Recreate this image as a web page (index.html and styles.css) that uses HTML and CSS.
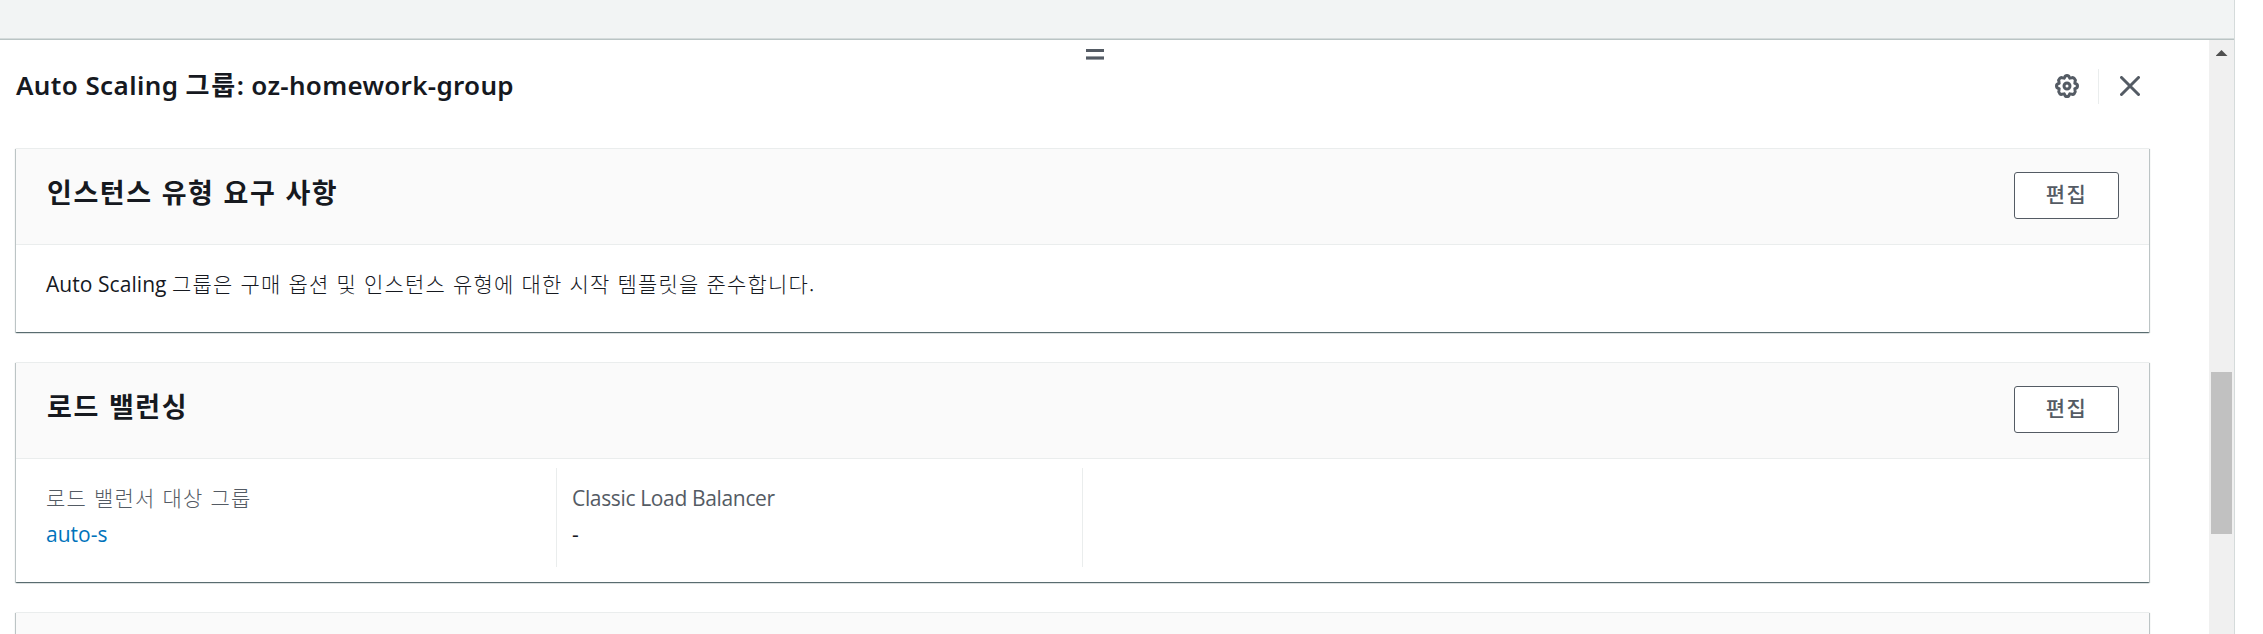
FILE: index.html
```html
<!DOCTYPE html>
<html lang="ko">
<head>
<meta charset="utf-8">
<title>Auto Scaling</title>
<link rel="stylesheet" href="styles.css">
</head>
<body>
<div class="page">
  <div class="backdrop"></div>
  <section class="panel">
    <div class="content">
      <div class="handle"><i class="grip"></i><i class="grip grip-low"></i></div>
      <header class="panel-head">
        <h1 class="panel-title"><span class="t-a">Auto Scaling </span><span class="t-b">그룹</span><span class="t-c">: oz-homework-group</span></h1>
        <div class="tools">
          <svg class="gear" viewBox="0 0 24 24"><path d="M9.8 3.2 Q10.2 1.5 12 1.5 Q13.8 1.5 14.2 3.2 L14.8 4.1 L16.6 3.9 Q18.1 3.1 19.4 4.6 Q20.8 5.9 20.1 7.3 L19.9 9.2 L20.8 9.8 Q22.5 10.2 22.5 12 Q22.5 13.8 20.8 14.2 L19.9 14.8 L20.1 16.7 Q20.8 18.1 19.4 19.4 Q18.1 20.9 16.6 20.1 L14.8 19.9 L14.2 20.8 Q13.8 22.5 12 22.5 Q10.2 22.5 9.8 20.8 L9.2 19.9 L7.4 20.1 Q5.9 20.9 4.6 19.4 Q3.2 18.1 3.9 16.7 L4.1 14.8 L3.2 14.2 Q1.5 13.8 1.5 12 Q1.5 10.2 3.2 9.8 L4.1 9.2 L3.9 7.3 Q3.2 5.9 4.6 4.6 Q5.9 3.1 7.4 3.9 L9.2 4.1 Z"/><circle cx="12" cy="12" r="3"/></svg>
          <i class="rule"></i>
          <svg class="close" viewBox="0 0 20 20"><path d="M1.5 1.5 L18.5 18.5 M18.5 1.5 L1.5 18.5"/></svg>
        </div>
      </header>
      <main class="cards">
        <article class="card card-type">
          <div class="card-head"><h2 class="card-title">인스턴스 유형 요구 사항</h2><button class="btn">편집</button></div>
          <p class="desc"><span class="lat">Auto Scaling </span><span class="kor">그룹은 구매 옵션 및 인스턴스 유형에 대한 시작 템플릿을 준수합니다.</span></p>
        </article>
        <article class="card card-lb">
          <div class="card-head"><h2 class="card-title">로드 밸런싱</h2><button class="btn">편집</button></div>
          <div class="cols">
            <div class="col"><div class="label kor">로드 밸런서 대상 그룹</div><a class="value link">auto-s</a></div>
            <div class="col"><div class="label label-lat">Classic Load Balancer</div><div class="value">-</div></div>
            <div class="col"></div>
          </div>
        </article>
        <article class="card card-next"></article>
      </main>
    </div>
    <div class="scroll"><i class="arrow"></i><i class="thumb"></i></div>
  </section>
</div>
</body>
</html>
```
FILE: styles.css
```css
* { box-sizing: border-box; }
body {
  margin: 0;
  background: #fff;
  color: #16191f;
  font-family: "Open Sans", "Noto Sans CJK KR", sans-serif;
  font-size: 21px;
}
h1, h2, p { margin: 0; }
.page {
  width: 2235px;
  height: 634px;
  display: flex;
  flex-direction: column;
  overflow: hidden;
  border-right: 1px solid #d5dbdb;
}
.backdrop {
  flex: 0 0 39px;
  background: #f2f4f4;
  border-bottom: 1px solid #d5dbdb;
}
.panel {
  flex: 1;
  display: flex;
  min-height: 0;
  border-top: 1px solid #bac4c4;
}
.content { flex: 1; min-width: 0; }
.handle {
  height: 28px;
  padding: 9px 19px 0 0;
  display: flex;
  flex-direction: column;
  align-items: center;
  gap: 4px;
}
.grip { width: 18px; height: 3px; background: #545b64; }
.grip-low { height: 4px; border: solid #9a9fa5; border-width: 1px 0; }
.panel-head {
  height: 36px;
  padding: 0 69px 0 16px;
  display: flex;
  align-items: center;
  justify-content: space-between;
}
.panel-title {
  padding-bottom: 2px;
  font-size: 26px;
  font-weight: 600;
  line-height: 34px;
  white-space: nowrap;
  font-family: "Noto Sans", "Noto Sans CJK KR", sans-serif;
}
.t-a { letter-spacing: .4px; }
.t-b { letter-spacing: 1.7px; }
.t-c { letter-spacing: .3px; }
.tools { display: flex; align-items: center; }
.gear { width: 24px; height: 24px; fill: none; stroke: #545b64; stroke-width: 3; }
.rule { width: 1px; height: 35px; margin: 0 21px 0 19px; background: #eaeded; }
.close { width: 20px; height: 20px; fill: none; stroke: #545b64; stroke-width: 3; stroke-linecap: round; }
.cards {
  padding: 44px 60px 0 16px;
  display: flex;
  flex-direction: column;
  gap: 30px;
}
.card {
  background: #fff;
  border-top: 1px solid #eaeded;
  box-shadow: 0 1px 1px 0 rgba(0,28,36,.45), 1px 1px 1px 0 rgba(0,28,36,.2), -1px 1px 1px 0 rgba(0,28,36,.2);
}
.card-type { height: 184px; }
.card-lb { height: 220px; }
.card-next { height: 100px; background: #fafafa; }
.card-head {
  height: 96px;
  padding: 23px 30px 0 31px;
  display: flex;
  align-items: flex-start;
  justify-content: space-between;
  background: #fafafa;
  border-bottom: 1px solid #eaeded;
}
.card-title {
  font: 700 27px/40px "Noto Sans CJK KR", sans-serif;
  letter-spacing: 1.55px;
}
.btn {
  width: 105px;
  height: 47px;
  padding: 0 0 6px;
  font: 500 21px/38px "Noto Sans CJK KR", sans-serif;
  letter-spacing: 1.5px;
  color: #545b64;
  background: #fff;
  border: 1px solid #545b64;
  border-radius: 3px;
}
.desc { padding: 22px 30px 0; line-height: 33px; white-space: nowrap; }
.lat { letter-spacing: .06px; }
.kor { font-family: "Noto Sans CJK KR", sans-serif; font-weight: 300; letter-spacing: 1.16px; }
.cols { display: grid; grid-template-columns: 540px 526px 1fr; padding-top: 9px; }
.col { height: 99px; padding: 13px 15px 0; }
.col:first-child { padding-left: 30px; }
.col + .col { border-left: 1px solid #eaeded; }
.label { height: 37px; line-height: 33px; color: #545b64; white-space: nowrap; }
.label-lat { padding-top: 1px; letter-spacing: -.35px; }
.value { display: block; line-height: 33px; }
.link { color: #0073bb; }
.scroll { flex: 0 0 25px; background: #f0f0f0; padding: 10px 2px 0; }
.arrow {
  display: block;
  width: 12px;
  height: 6px;
  margin: 0 auto;
  background: #505050;
  clip-path: polygon(50% 0, 100% 100%, 0 100%);
}
.thumb { display: block; height: 162px; margin-top: 316px; background: #c1c1c1; }
```
